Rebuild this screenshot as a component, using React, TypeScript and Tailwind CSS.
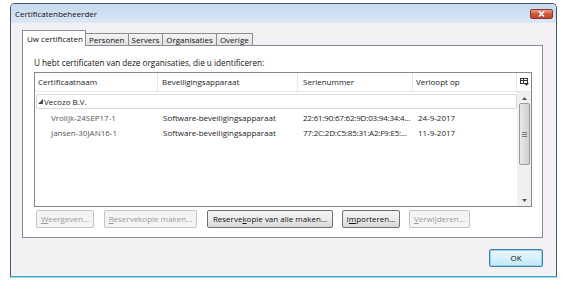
import React from "react";

const font = { fontFamily: '"Open Sans", "Noto Sans", sans-serif' };

const Btn = ({
  pre,
  u,
  post,
  w,
  disabled,
}: {
  pre: string;
  u: string;
  post: string;
  w: string;
  disabled?: boolean;
}) => (
  <div
    className={`${w} h-[18px] flex items-center justify-center rounded-[2px] border text-[8px] leading-none ${
      disabled
        ? "border-[#c5c5c5] bg-[#f4f4f4] text-[#9a9a9a]"
        : "border-[#707070] bg-gradient-to-b from-[#f4f4f4] via-[#ebebeb] to-[#d8d8d8] text-[#111]"
    }`}
  >
    <span>
      {pre}
      <span className="underline">{u}</span>
      {post}
    </span>
  </div>
);

const Row = ({ name, serial, date }: { name: string; serial: string; date: string }) => (
  <div className="flex h-[15px] items-center text-[8px] leading-none text-[#222]">
    <div className="w-[123px] pl-[15px] text-[#555]">{name}</div>
    <div className="w-[140px] pl-[4px]">Software-beveiligingsapparaat</div>
    <div className="w-[118px] pl-[4px] whitespace-nowrap tracking-[-0.2px]">{serial}</div>
    <div className="pl-[1px]">{date}</div>
  </div>
);

export default function App() {
  const tabs = ["Personen", "Servers", "Organisaties", "Overige"];
  return (
    <div className="w-[570px] h-[283px] bg-white pl-[10px] pt-[3px]" style={font}>
      <div className="w-[547px] h-[274px] flex flex-col rounded-t-[5px] border border-[#44566c] border-b-[#3aa6c4] shadow-[0_1px_0_#9ddbe8]">
        {/* title bar */}
        <div className="h-[19px] flex items-center justify-between pl-[4px] pr-[3px] rounded-t-[4px] bg-gradient-to-b from-[#c4d8ee] to-[#dbe7f4]">
          <span className="text-[8px] text-[#111] leading-none">Certificatenbeheerder</span>
          <div className="w-[23px] h-[10px] rounded-[2px] border border-[#8a3a2c] bg-gradient-to-b from-[#e9a08c] via-[#d0553c] to-[#c2432c] flex items-center justify-center">
            <svg width="7" height="6" viewBox="0 0 7 6">
              <path d="M1 0.5 L6 5.5 M6 0.5 L1 5.5" stroke="white" strokeWidth="1.6" />
            </svg>
          </div>
        </div>

        {/* body */}
        <div className="flex-1 bg-[#f4f1f5] pt-[7px] pl-[11px] pr-[13px] flex flex-col">
          <div className="flex items-end h-[15px]">
            <div className="relative z-10 mb-[-1px] h-[16px] w-[64px] bg-white border border-[#898c95] border-b-0 flex items-center pl-[4px] text-[8px] leading-none text-[#111]">
              Uw certificaten
            </div>
            {tabs.map((t) => (
              <div
                key={t}
                className="h-[12px] px-[3px] border border-l-0 border-b-0 border-[#898c95] bg-gradient-to-b from-[#f3f3f3] to-[#e2e2e2] flex items-center text-[8px] leading-none text-[#111]"
              >
                {t}
              </div>
            ))}
          </div>

          <div className="h-[193px] bg-white border border-[#898c95] pl-[11px] pr-[10px] pt-[11px] flex flex-col">
            <div className="h-[12px] text-[8.2px] leading-[12px] text-[#111]">
              U hebt certificaten van deze organisaties, die u identificeren:
            </div>
            <div className="mt-[3px] h-[135px] border border-[#828790] flex flex-col">
              {/* header */}
              <div className="h-[19px] flex border-b border-[#e5e5e5] text-[8px] leading-none text-[#222]">
                <div className="w-[123px] pl-[3px] flex items-center border-r border-[#e5e5e5]">Certificaatnaam</div>
                <div className="w-[140px] pl-[4px] flex items-center border-r border-[#e5e5e5]">Beveiligingsapparaat</div>
                <div className="w-[115px] pl-[5px] flex items-center border-r border-[#e5e5e5]">Serienummer</div>
                <div className="w-[104px] pl-[3px] flex items-center border-r border-[#e5e5e5]">Verloopt op</div>
                <div className="flex-1 flex items-center justify-center">
                  <svg width="9" height="8" viewBox="0 0 9 8">
                    <rect x="0.5" y="0.5" width="7" height="5" fill="none" stroke="#333" />
                    <path d="M0.5 2.5 H7.5 M3.5 0.5 V5.5" stroke="#333" />
                    <path d="M4 5 H9 L6.5 8 Z" fill="#333" />
                  </svg>
                </div>
              </div>
              <div className="flex-1 flex">
                <div className="flex-1 pl-[1px] pt-[2px]">
                  <div className="h-[15px] border border-[#d9d9d9] rounded-[2px] flex items-center pl-[1px] text-[8px] leading-none text-[#222]">
                    <svg width="5" height="5" viewBox="0 0 5 5" className="mr-[1px]">
                      <path d="M5 0 V5 H0 Z" fill="#444" />
                    </svg>
                    Vecozo B.V.
                  </div>
                  <div className="pt-[1px]">
                    <Row name="Vrolijk-24SEP17-1" serial="22:61:90:67:62:9D:03:94:34:4..." date="24-9-2017" />
                    <Row name="Jansen-30JAN16-1" serial="77:2C:2D:C5:85:31:A2:F9:E5:..." date="11-9-2017" />
                  </div>
                </div>
                {/* scrollbar */}
                <div className="w-[14px] bg-[#f0f0f0] flex flex-col items-center pt-[5px] pb-[4px]">
                  <svg width="5" height="3" viewBox="0 0 5 3">
                    <path d="M0 3 L2.5 0 L5 3 Z" fill="#555" />
                  </svg>
                  <div className="mt-[3px] w-[11px] h-[62px] rounded-[2px] border border-[#9a9a9a] bg-gradient-to-r from-[#e8e8e8] via-[#dcdcdc] to-[#cfcfcf] flex flex-col items-center justify-center gap-[1px]">
                    <div className="w-[5px] h-px bg-[#777]" />
                    <div className="w-[5px] h-px bg-[#777]" />
                    <div className="w-[5px] h-px bg-[#777]" />
                  </div>
                  <div className="flex-1" />
                  <svg width="5" height="3" viewBox="0 0 5 3">
                    <path d="M0 0 L2.5 3 L5 0 Z" fill="#555" />
                  </svg>
                </div>
              </div>
            </div>
            <div className="mt-[3px] flex pl-[2px]">
              <Btn pre="" u="W" post="eergeven..." w="w-[58px]" disabled />
              <div className="ml-[10px]">
                <Btn pre="" u="R" post="eservekopie maken..." w="w-[93px]" disabled />
              </div>
              <div className="ml-[10px]">
                <Btn pre="Reserve" u="k" post="opie van alle maken..." w="w-[126px]" />
              </div>
              <div className="ml-[9px]">
                <Btn pre="I" u="m" post="porteren..." w="w-[58px]" />
              </div>
              <div className="ml-[9px]">
                <Btn pre="" u="V" post="erwijderen..." w="w-[61px]" disabled />
              </div>
            </div>
          </div>

          <div className="mt-[11px] flex justify-end">
            <div className="w-[54px] h-[18px] rounded-[2px] border border-[#3c7fb1] bg-gradient-to-b from-[#eaf6fd] via-[#d9f0fc] to-[#bee6fd] shadow-[inset_0_0_0_1px_#9ed0f0] flex items-center justify-center text-[8px] leading-none text-[#111]">
              OK
            </div>
          </div>
        </div>
      </div>
    </div>
  );
}
